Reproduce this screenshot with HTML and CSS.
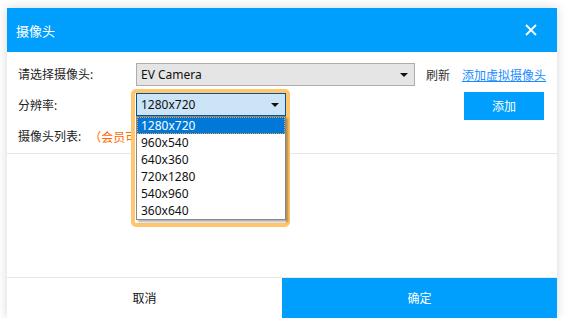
FILE: index.html
```html
<!DOCTYPE html>
<html lang="zh-CN">
<head>
    <meta charset="UTF-8">
    <title>摄像头</title>
    <link rel="stylesheet" href="styles.css">
</head>
<body>
    <div class="dialog">
        <div class="dialog-header">
            <span class="dialog-title">摄像头</span>
            <span class="close-btn">
                <svg width="12" height="12" viewBox="0 0 12 12"><path d="M1 1L11 11M11 1L1 11" stroke="#fff" stroke-width="1.8" fill="none"/></svg>
            </span>
        </div>

        <div class="dialog-body">
            <div class="form">
                <div class="row row-camera">
                    <span class="field-label">请选择摄像头:</span>
                    <div class="select select-camera"><span>EV Camera</span><i class="caret"></i></div>
                    <span class="refresh">刷新</span>
                    <a class="link" href="#">添加虚拟摄像头</a>
                </div>

                <div class="row row-res">
                    <span class="field-label">分辨率:</span>
                    <div class="res-wrap">
                        <div class="focus-ring"></div>
                        <div class="select select-res"><span>1280x720</span><i class="caret"></i></div>
                        <ul class="res-list">
                            <li class="active">1280x720</li>
                            <li>960x540</li>
                            <li>640x360</li>
                            <li>720x1280</li>
                            <li>540x960</li>
                            <li>360x640</li>
                        </ul>
                    </div>
                    <button class="btn-add">添加</button>
                </div>

                <div class="row row-list">
                    <span class="list-label">摄像头列表:</span>
                    <span class="note">（会员可添加多个摄像头）</span>
                </div>
            </div>
        </div>

        <div class="dialog-footer">
            <button class="btn-cancel">取消</button>
            <button class="btn-ok">确定</button>
        </div>
    </div>
</body>
</html>
```

FILE: styles.css
```css
* { box-sizing: border-box; font-family: "Noto Sans", "Noto Sans CJK SC", sans-serif; }
body { margin: 0; background: #fff; }

.dialog { width: 550px; height: 310px; margin: 8px 0 0 7px; background: #fff; display: flex; flex-direction: column; box-shadow: 0 0 10px rgba(0, 0, 0, 0.16); }

.dialog-header { height: 44px; background: #009ffd; padding: 0 20px 0 9px; display: flex; align-items: center; justify-content: space-between; }
.dialog-title { color: #fff; font-size: 13px; }
.close-btn { display: flex; width: 12px; height: 12px; }

.dialog-body { flex: 1; }
.form { padding: 11px 0 5px 11px; border-bottom: 1px solid #e8e8e8; }
.row { display: flex; align-items: center; font-size: 12px; color: #222; }
.row-camera { height: 23px; }
.row-res { height: 28px; margin-top: 6px; align-items: flex-start; }
.row-list { height: 22px; margin-top: 6px; }
.field-label { width: 118px; line-height: 22px; }
.row-res .field-label { line-height: 28px; }
.list-label { line-height: 22px; }

.select { height: 23px; border: 1px solid #adadad; background: #e5e5e5; display: flex; align-items: center; justify-content: space-between; padding: 0 6px 0 4px; font-size: 12px; color: #111; }
.caret { width: 0; height: 0; border-left: 4px solid transparent; border-right: 4px solid transparent; border-top: 4px solid #111; }
.select-camera { width: 279px; }
.refresh { margin-left: 11px; color: #333; }
.link { margin-left: 12px; color: #1a8cff; }

.res-wrap { position: relative; width: 150px; margin-top: 1px; }
.select-res { position: relative; z-index: 1; background: #cce4f7; border-color: #005499; }
.focus-ring { position: absolute; left: -5px; top: -4px; right: -4px; bottom: -111px; border: 4px solid #ffc66d; border-radius: 5px; background: #fff; }
.res-list { position: absolute; z-index: 1; left: 0; top: 100%; width: 150px; margin: 0; padding: 0; list-style: none; background: #fff; border: 1px solid #828790; box-shadow: 2px 2px 2px rgba(0, 0, 0, 0.3); }
.res-list li { height: 17px; line-height: 17px; padding-left: 4px; font-size: 12px; color: #111; }
.res-list li.active { background: #0078d7; color: #fff; outline: 1px dotted #ff9c2a; outline-offset: -1px; }

.btn-add { margin-left: auto; margin-right: 13px; width: 80px; height: 28px; border: none; background: #009ffd; color: #fff; font-size: 12px; }

.note { margin-left: 8px; color: #ff6a00; }

.dialog-footer { height: 41px; border-top: 1px solid #e8e8e8; display: flex; }
.dialog-footer button { flex: 1; border: none; font-size: 12px; cursor: pointer; }
.btn-cancel { background: #fff; color: #111; }
.btn-ok { background: #009ffd; color: #fff; }
```
